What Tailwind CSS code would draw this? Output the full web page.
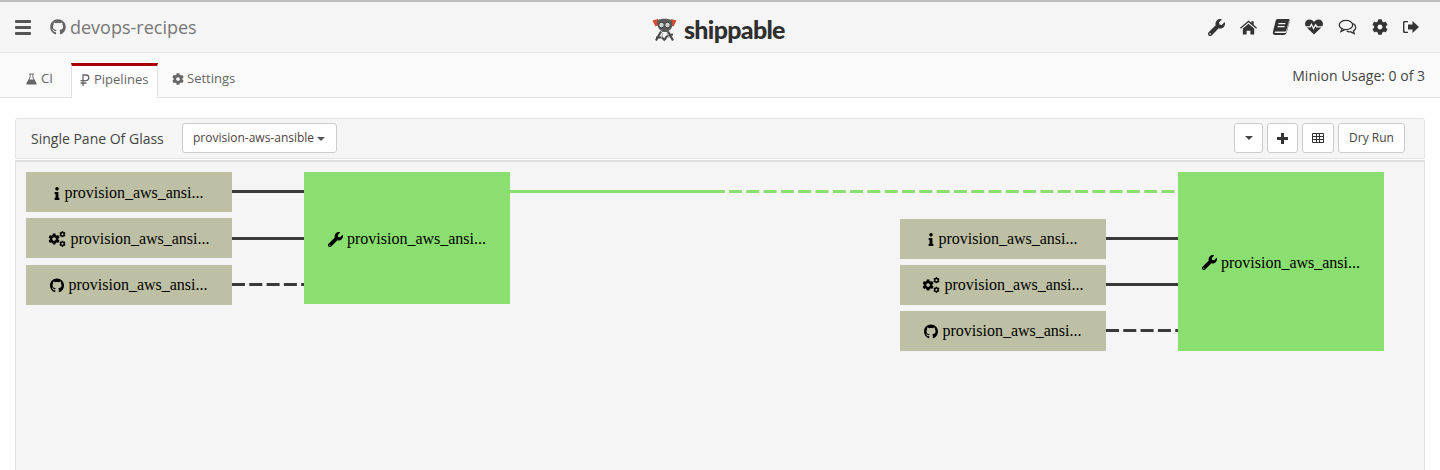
<!DOCTYPE html>
<html lang="en">
<head>
    <meta charset="UTF-8">
    <title>devops-recipes - Pipelines</title>
    <script src="https://cdn.jsdelivr.net/npm/@tailwindcss/browser@4"></script>
</head>
<body class="h-[470px] overflow-hidden bg-white font-['Open_Sans',sans-serif] text-[#555]">
    <!-- icon set -->
    <svg class="hidden">
        <symbol id="i-wrench" viewBox="0 0 512 512"><path fill="currentColor" d="M507.73 109.1c-2.24-9.03-13.54-12.09-20.12-5.51l-74.36 74.36-67.88-11.31-11.31-67.88 74.36-74.36c6.62-6.62 3.43-17.9-5.66-20.16-47.38-11.74-99.55.91-136.58 37.93-39.64 39.64-50.55 97.1-34.05 147.2L18.74 402.76c-24.99 24.99-24.99 65.51 0 90.5 24.99 24.99 65.51 24.99 90.5 0l213.21-213.21c50.12 16.71 107.47 5.68 147.37-34.22 37.07-37.07 49.7-89.32 37.91-136.73zM64 472c-13.25 0-24-10.75-24-24 0-13.26 10.75-24 24-24s24 10.74 24 24c0 13.25-10.75 24-24 24z"/></symbol>
        <symbol id="i-github" viewBox="0 0 496 512"><path fill="currentColor" d="M244.8 8C106.1 8 0 113.3 0 252c0 110.9 69.8 205.8 169.5 239.2 12.8 2.3 17.3-5.6 17.3-12.1 0-6.2-.3-40.4-.3-61.4 0 0-70 15-84.7-29.8 0 0-11.4-29.1-27.8-36.6 0 0-22.9-15.7 1.6-15.4 0 0 24.9 2 38.6 25.8 21.9 38.6 58.6 27.5 72.9 20.9 2.3-16 8.8-27.1 16-33.7-55.9-6.2-112.3-14.3-112.3-110.5 0-27.5 7.6-41.3 23.6-58.9-2.6-6.5-11.1-33.3 2.6-67.9 20.9-6.5 69 27 69 27 20-5.6 41.5-8.5 62.8-8.5s42.8 2.9 62.8 8.5c0 0 48.1-33.6 69-27 13.7 34.7 5.2 61.4 2.6 67.9 16 17.7 25.8 31.5 25.8 58.9 0 96.5-58.9 104.2-114.8 110.5 9.2 7.9 17 22.9 17 46.4 0 33.7-.3 75.4-.3 83.6 0 6.5 4.6 14.4 17.3 12.1C428.2 457.8 496 362.9 496 252 496 113.3 383.5 8 244.8 8z"/></symbol>
        <symbol id="i-cog" viewBox="0 0 512 512"><path fill="currentColor" d="M487.4 315.7l-42.6-24.6c4.3-23.2 4.3-47 0-70.2l42.6-24.6c4.9-2.8 7.1-8.6 5.5-14-11.1-35.6-30-67.8-54.7-94.6-3.8-4.1-10-5.1-14.8-2.3L380.8 110c-17.9-15.4-38.5-27.3-60.8-35.1V25.8c0-5.6-3.9-10.5-9.4-11.7-36.7-8.2-74.3-7.8-109.2 0-5.5 1.2-9.4 6.1-9.4 11.7V75c-22.2 7.9-42.8 19.8-60.8 35.1L88.7 85.5c-4.9-2.8-11-1.9-14.8 2.3-24.7 26.7-43.6 58.9-54.7 94.6-1.7 5.4.6 11.2 5.5 14L67.3 221c-4.3 23.2-4.3 47 0 70.2l-42.6 24.6c-4.9 2.8-7.1 8.6-5.5 14 11.1 35.6 30 67.8 54.7 94.6 3.8 4.1 10 5.1 14.8 2.3l42.6-24.6c17.9 15.4 38.5 27.3 60.8 35.1v49.2c0 5.6 3.9 10.5 9.4 11.7 36.7 8.2 74.3 7.8 109.2 0 5.5-1.2 9.4-6.1 9.4-11.7v-49.2c22.2-7.9 42.8-19.8 60.8-35.1l42.6 24.6c4.9 2.8 11 1.9 14.8-2.3 24.7-26.7 43.6-58.9 54.7-94.6 1.5-5.5-.7-11.3-5.6-14.1zM256 336c-44.1 0-80-35.9-80-80s35.9-80 80-80 80 35.9 80 80-35.9 80-80 80z"/></symbol>
        <symbol id="i-info" viewBox="0 0 192 512"><path fill="currentColor" d="M20 424h20V280H20c-11 0-20-9-20-20v-48c0-11 9-20 20-20h112c11 0 20 9 20 20v212h20c11 0 20 9 20 20v48c0 11-9 20-20 20H20c-11 0-20-9-20-20v-48c0-11 9-20 20-20zM96 0a72 72 0 1 0 0 144A72 72 0 0 0 96 0z"/></symbol>
        <symbol id="i-cogs" viewBox="0 0 24 22">
            <use href="#i-cog" x="0" y="3" width="16" height="16"/>
            <use href="#i-cog" x="15" y="0" width="9" height="9"/>
            <use href="#i-cog" x="15" y="13" width="9" height="9"/>
        </symbol>
    </svg>

    <!-- top bar -->
    <header class="flex h-[53px] items-center border-t-2 border-b border-t-[#bdbdbd] border-b-[#e7e7e7] bg-[#f5f5f5] pl-[15px] pr-[21px]">
        <div class="flex w-[35px] flex-col gap-[3px]">
            <span class="h-[3px] w-4 rounded-[1px] bg-[#555]"></span>
            <span class="h-[3px] w-4 rounded-[1px] bg-[#555]"></span>
            <span class="h-[3px] w-4 rounded-[1px] bg-[#555]"></span>
        </div>
        <svg class="h-4 w-[16px] text-[#666]"><use href="#i-github"/></svg>
        <span class="ml-[4px] text-[18px] leading-none text-[#777]">devops-recipes</span>
        <!-- logo -->
        <div class="absolute left-[652px] top-[15px] flex h-[28px] items-center">
            <svg class="h-[25px] w-[25px]" viewBox="0 0 25 25">
                <path fill="#d8492f" d="M.5 3.500L6 2l1 6-3.500 1.500zM24.500 3.500L19 2l-1 6 3.500 1.500z"/>
                <path fill="#5a5a5a" d="M5 3.500C8 1 17 1 20 3.500l.5 5c-.5 3-3 5-4 5.500l-1 1h-5l-1-1c-1-.5-3.500-2.500-4-5.500z"/>
                <circle cx="9.500" cy="8" r="2.800" fill="#cfcfcf" stroke="#3d3d3d"/>
                <circle cx="15.500" cy="8" r="2.800" fill="#cfcfcf" stroke="#3d3d3d"/>
                <path fill="none" stroke="#4a4a4a" stroke-width="2.200" d="M9 14.500L4 23.500M16 14.500l5 9M4 20.500h6l3 3M21 17.500c-4 0-7 1.500-8 5"/>
                <path fill="none" stroke="#a5a5a5" d="M11 16l-2 6M15 16l2 5"/>
            </svg>
            <span class="ml-[7px] font-['Lato',sans-serif] text-[25px] font-black leading-none tracking-[-0.7px] text-[#2f2f2f]">shippable</span>
        </div>
        <nav class="ml-auto flex items-center gap-[15px] text-[#333]">
            <svg class="h-[17px] w-[17px]"><use href="#i-wrench"/></svg>
            <svg class="h-[15px] w-[17px]" viewBox="0 0 18 15"><path fill="currentColor" d="M9 0l3 2.600V1h2.500v3.700L18 7.700l-.9 1L9 2 .9 8.700 0 7.700zM9 3.500l6 5V15h-4v-4H7v4H3V8.500z"/></svg>
            <svg class="h-4 w-[18px]" viewBox="0 0 17 16"><path fill="currentColor" fill-rule="evenodd" d="M5 0h11c1 0 1.200.8 1 1.500l-3 11c-.3 1-1 1.500-2 1.500H3c-.7 0-1-.4-.8-.9.200-.5.700-.6 1.300-.6h9c.6 0 1-.3 1.200-1L16.500 2 17 3l-2.700 10c-.4 1.500-1.300 3-3 3H2.500C1 16 0 14.600.4 13L3 2.500C3.300 1 4 0 5 0zM6 4l-.3 1.200h7L13 4zM5.300 7l-.3 1.200h7l.3-1.200z"/></svg>
            <svg class="h-4 w-[18px]" viewBox="0 0 19 16"><path fill="currentColor" d="M9.500 16L1.800 8.600h4l1-2 2.200 4.500 2-4 1 1.500h5.200zM.7 7.200C-1.200 3.500 1.300 0 4.700 0 6.800 0 8.500 1.300 9.500 2.700 10.500 1.300 12.200 0 14.300 0c3.400 0 5.900 3.500 4 7.200h-5.100l-2.200-3-2 4-2.200-4.500-1.900 3.500z"/></svg>
            <svg class="h-4 w-[19px]" viewBox="0 0 18 16"><g fill="none" stroke="currentColor" stroke-width="1.300"><ellipse cx="7.500" cy="6" rx="6.700" ry="4.700"/><path d="M3.500 10l-1 2.500 3.500-1.700M14.500 4.500c2 1 3 3 2.500 5-.3 1-1 1.800-2 2.400l.7 2.600-3.500-1.700c-1.500.3-3 0-4-.8"/></g></svg>
            <svg class="h-4 w-4"><use href="#i-cog"/></svg>
            <svg class="h-[14px] w-4" viewBox="0 0 16 14"><path fill="currentColor" d="M1.500 1H5v1.300H2.300c-.5 0-.9.400-.9.900v7.600c0 .5.400.9.900.9H5V13H1.500C.7 13 0 12.300 0 11.500v-9C0 1.700.7 1 1.500 1zM9.500 1L16 7l-6.500 6V9.500H5v-5h4.500z"/></svg>
        </nav>
    </header>

    <!-- tabs -->
    <div class="flex h-[45px] items-end justify-between border-b border-[#e2e2e2] bg-[#fafafa] pl-[15px] pr-[15px]">
        <div class="flex h-[34px] text-[13px] text-[#666]">
            <a class="flex w-[56px] items-center gap-1 pb-[3px] pl-[11px]">
                <svg class="h-3 w-[11px]" viewBox="0 0 12 12"><path fill="currentColor" fill-rule="evenodd" d="M3.500 0h5v1H8v3l3.500 6.500c.4.800 0 1.500-.8 1.500H1.300c-.8 0-1.200-.7-.8-1.500L4 4V1h-.5zM5 1v3.300L3.700 6.500h4.600L7 4.300V1z"/></svg>
                CI
            </a>
            <a class="mb-[-1px] flex w-[87px] items-center gap-1 border-x border-t-[3px] border-x-[#e2e2e2] border-t-[#a80000] bg-white pb-[5px] pl-2">
                <svg class="h-3 w-[10px]" viewBox="0 0 9 12"><path fill="none" stroke="currentColor" stroke-width="1.300" d="M2.500 12V1h3a2.700 2.700 0 0 1 0 5.600H0M0 9h6"/></svg>
                Pipelines
            </a>
            <a class="ml-[14px] flex items-center gap-[3px] pb-[3px]">
                <svg class="h-3 w-3"><use href="#i-cog"/></svg>
                Settings
            </a>
        </div>
        <span class="mb-[11px] text-[14px] leading-5 text-[#444]">Minion Usage: 0 of 3</span>
    </div>

    <!-- pipeline panel -->
    <main class="mx-[15px] mt-5">
        <div class="flex h-[41px] items-center rounded-t-[3px] border border-[#e4e4e4] bg-[#f5f5f5] pb-[1px] pl-[15px] pr-[19px]">
            <span class="w-[151px] text-[14px] text-[#444]">Single Pane Of Glass</span>
            <button class="flex h-[30px] w-[155px] items-center gap-[3px] rounded-[3px] border border-[#ccc] bg-white pl-[10px] text-[12px] text-[#4f3f3f]">
                provision-aws-ansible
                <span class="mt-[1px] border-x-[4px] border-t-[4px] border-x-transparent border-t-[#555]"></span>
            </button>
            <div class="ml-auto flex gap-[4px] text-[#333]">
                <button class="flex h-[30px] w-[29px] items-center justify-center rounded-[3px] border border-[#ccc] bg-white">
                    <span class="border-x-[4px] border-t-[4px] border-x-transparent border-t-[#444]"></span>
                </button>
                <button class="flex h-[30px] w-[31px] items-center justify-center rounded-[3px] border border-[#ccc] bg-white">
                    <svg class="h-[11px] w-[11px]" viewBox="0 0 11 11"><path fill="currentColor" d="M4 0h3v4h4v3H7v4H4V7H0V4h4z"/></svg>
                </button>
                <button class="flex h-[30px] w-[32px] items-center justify-center rounded-[3px] border border-[#ccc] bg-white">
                    <svg class="h-[10px] w-3" viewBox="0 0 12 10"><path fill="none" stroke="currentColor" d="M.5.500h11v9H.500zM.5 3.500h11M.5 6.500h11M4.500 .5v9M7.500 .5v9"/></svg>
                </button>
                <button class="h-[30px] w-[67px] rounded-[3px] border border-[#ccc] bg-white text-[12px] text-[#444]">Dry Run</button>
            </div>
        </div>
        <!-- diagram canvas, nodes are placed by coordinates -->
        <div class="relative mt-[1px] h-[320px] border border-t-2 border-[#e0e0e0] bg-[#f5f5f5] font-['Liberation_Serif',serif] text-[16px] text-black">
            <svg class="absolute left-[-1px] top-[-2px] h-[320px] w-[1410px]" viewBox="0 0 1410 320" fill="none">
                <g stroke="#3a3a3a" stroke-width="3">
                    <path d="M217 31.500h72M217 78.500h72"/>
                    <path d="M217 124.500h72" stroke-dasharray="13 4.300"/>
                    <path d="M1091 78.500h72M1091 124.500h72"/>
                    <path d="M1091 170.500h72" stroke-dasharray="13 4.300"/>
                </g>
                <path d="M495 31.500h215" stroke="#8bde70" stroke-width="3"/>
                <path d="M714 31.500h449" stroke="#8bde70" stroke-width="3" stroke-dasharray="13 4.300"/>
            </svg>

            <div class="absolute left-[10px] top-[10px] flex h-10 w-[206px] items-center justify-center gap-[4px] bg-[#bdc0a4] pt-[2px]">
                <svg class="h-[13px] w-[6px]"><use href="#i-info"/></svg> provision_aws_ansi...
            </div>
            <div class="absolute left-[10px] top-[56px] flex h-10 w-[206px] items-center justify-center gap-[4px] bg-[#bdc0a4] pt-[2px]">
                <svg class="h-[16px] w-[18px]"><use href="#i-cogs"/></svg> provision_aws_ansi...
            </div>
            <div class="absolute left-[10px] top-[103px] flex h-10 w-[206px] items-center justify-center gap-[4px] bg-[#bdc0a4]">
                <svg class="h-[15px] w-[14px]"><use href="#i-github"/></svg> provision_aws_ansi...
            </div>
            <div class="absolute left-[288px] top-[10px] flex h-[132px] w-[206px] items-center justify-center gap-[4px] bg-[#8bde70] pt-[2px]">
                <svg class="h-[15px] w-[15px]"><use href="#i-wrench"/></svg> provision_aws_ansi...
            </div>

            <div class="absolute left-[884px] top-[57px] flex h-10 w-[206px] items-center justify-center gap-[4px] bg-[#bdc0a4]">
                <svg class="h-[13px] w-[6px]"><use href="#i-info"/></svg> provision_aws_ansi...
            </div>
            <div class="absolute left-[884px] top-[103px] flex h-10 w-[206px] items-center justify-center gap-[4px] bg-[#bdc0a4]">
                <svg class="h-[16px] w-[18px]"><use href="#i-cogs"/></svg> provision_aws_ansi...
            </div>
            <div class="absolute left-[884px] top-[149px] flex h-10 w-[206px] items-center justify-center gap-[4px] bg-[#bdc0a4]">
                <svg class="h-[15px] w-[14px]"><use href="#i-github"/></svg> provision_aws_ansi...
            </div>
            <div class="absolute left-[1162px] top-[10px] flex h-[179px] w-[206px] items-center justify-center gap-[4px] bg-[#8bde70] pt-[2px]">
                <svg class="h-[15px] w-[15px]"><use href="#i-wrench"/></svg> provision_aws_ansi...
            </div>
        </div>
    </main>
</body>
</html>
